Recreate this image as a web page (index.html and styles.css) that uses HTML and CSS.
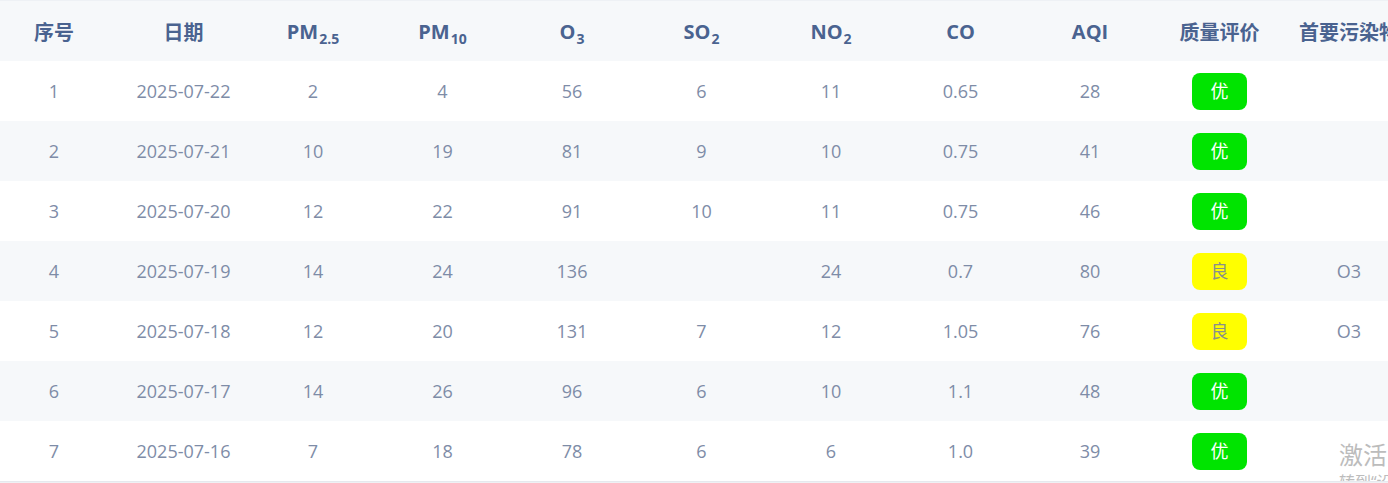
FILE: index.html
```html
<!DOCTYPE html>
<html lang="zh">
<head>
<meta charset="utf-8">
<title>空气质量</title>
<link rel="stylesheet" href="styles.css">
</head>
<body>
<div class="page">
  <div class="scroller">
    <table class="aq-table">
      <thead>
        <tr>
          <th>序号</th>
          <th>日期</th>
          <th>PM<sub>2.5</sub></th>
          <th>PM<sub>10</sub></th>
          <th>O<sub>3</sub></th>
          <th>SO<sub>2</sub></th>
          <th>NO<sub>2</sub></th>
          <th>CO</th>
          <th>AQI</th>
          <th>质量评价</th>
          <th>首要污染物</th>
        </tr>
      </thead>
      <tbody>
        <tr><td>1</td><td>2025-07-22</td><td>2</td><td>4</td><td>56</td><td>6</td><td>11</td><td>0.65</td><td>28</td><td><span class="badge good">优</span></td><td></td></tr>
        <tr><td>2</td><td>2025-07-21</td><td>10</td><td>19</td><td>81</td><td>9</td><td>10</td><td>0.75</td><td>41</td><td><span class="badge good">优</span></td><td></td></tr>
        <tr><td>3</td><td>2025-07-20</td><td>12</td><td>22</td><td>91</td><td>10</td><td>11</td><td>0.75</td><td>46</td><td><span class="badge good">优</span></td><td></td></tr>
        <tr><td>4</td><td>2025-07-19</td><td>14</td><td>24</td><td>136</td><td></td><td>24</td><td>0.7</td><td>80</td><td><span class="badge fair">良</span></td><td>O3</td></tr>
        <tr><td>5</td><td>2025-07-18</td><td>12</td><td>20</td><td>131</td><td>7</td><td>12</td><td>1.05</td><td>76</td><td><span class="badge fair">良</span></td><td>O3</td></tr>
        <tr><td>6</td><td>2025-07-17</td><td>14</td><td>26</td><td>96</td><td>6</td><td>10</td><td>1.1</td><td>48</td><td><span class="badge good">优</span></td><td></td></tr>
        <tr><td>7</td><td>2025-07-16</td><td>7</td><td>18</td><td>78</td><td>6</td><td>6</td><td>1.0</td><td>39</td><td><span class="badge good">优</span></td><td></td></tr>
      </tbody>
    </table>
    <div class="watermark">
      <div class="wm-title">激活 Windows</div>
      <div class="wm-sub">转到“设置”以激活 Windows。</div>
    </div>
  </div>
  <div class="scrollbar"></div>
</div>
</body>
</html>
```

FILE: styles.css
```css
html, body {
  margin: 0;
  padding: 0;
  background: #ffffff;
}

body {
  font-family: "Open Sans", "Noto Sans CJK SC", sans-serif;
  width: 1388px;
  height: 483px;
  overflow: hidden;
}

.page {
  width: 1388px;
}

.scroller {
  position: relative;
  width: 1388px;
  height: 481px;
  overflow: hidden;
}

.aq-table {
  table-layout: fixed;
  border-collapse: collapse;
  border-spacing: 0;
  width: 1424.5px;
  margin-left: -10.75px;
}

.aq-table th,
.aq-table td {
  width: 129.5px;
  height: 60px;
  padding: 0;
  text-align: center;
  vertical-align: middle;
  white-space: nowrap;
  overflow: hidden;
}

.aq-table thead tr {
  background: #f6f8fa;
  border-top: 1px solid #eef1f5;
}

.aq-table th {
  font-size: 20px;
  font-weight: 700;
  color: #4a6390;
  height: 60px;
}

.aq-table th sub {
  font-size: 14px;
  vertical-align: baseline;
  position: relative;
  top: 5px;
  margin-left: 1px;
}

.aq-table td {
  font-size: 18px;
  color: #7e8ca7;
}

.aq-table tbody tr:nth-child(odd) {
  background: #ffffff;
}

.aq-table tbody tr:nth-child(even) {
  background: #f6f8fa;
}

.badge {
  display: inline-block;
  width: 55px;
  height: 37px;
  line-height: 37px;
  border-radius: 8px;
  font-size: 18px;
  vertical-align: middle;
}

.badge.good {
  background: #00e400;
  color: #ffffff;
}

.badge.fair {
  background: #ffff00;
  color: #8a8f8a;
}

.watermark {
  position: absolute;
  left: 1339px;
  top: 437px;
  color: #bcbcbc;
  white-space: nowrap;
  pointer-events: none;
}

.wm-title {
  font-size: 24px;
  line-height: 36px;
}

.wm-sub {
  font-size: 16px;
  line-height: 18px;
}

.scrollbar {
  height: 2px;
  background: #eff1f4;
  border-top: 1px solid #e6e9ee;
  box-sizing: border-box;
}
```
